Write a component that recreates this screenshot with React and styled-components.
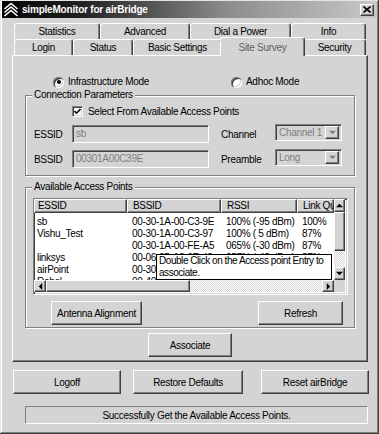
import React from 'react';
import styled, { createGlobalStyle, css } from 'styled-components';

const FACE = '#d4d4d4';

const GlobalStyle = createGlobalStyle`
  html, body { margin: 0; padding: 0; background: ${FACE}; }
  body {
    font-family: "Liberation Sans", Arial, sans-serif;
    font-size: 10px;
    letter-spacing: -0.3px;
    color: #000;
  }
  * { box-sizing: border-box; }
`;

const raised = css`
  border-top: 1px solid #fff;
  border-left: 1px solid #fff;
  border-right: 1px solid #404040;
  border-bottom: 1px solid #404040;
  box-shadow: inset -1px -1px #808080;
`;

const sunken = css`
  border-top: 1px solid #808080;
  border-left: 1px solid #808080;
  border-right: 1px solid #fff;
  border-bottom: 1px solid #fff;
  box-shadow: inset 1px 1px #404040, inset -1px -1px ${FACE};
`;

const Window = styled.div`
  width: 379px;
  height: 434px;
  background: ${FACE};
  padding: 1px 2px 2px;
  box-shadow: inset -1px -1px #404040, inset 1px 1px #e4e4e4, inset -2px -2px #808080, inset 2px 2px #fff;
  display: flex;
  flex-direction: column;
`;

const TitleBar = styled.div`
  height: 17px;
  display: flex;
  align-items: center;
  padding: 0 3px 0 1px;
  background: linear-gradient(90deg, #060606 0%, #1e1e1e 20%, #8c8c8c 60%, #c8c8c8 100%);
  color: #fff;
`;

const Title = styled.div`
  flex: 1;
  margin-left: 3px;
  font-weight: bold;
  font-size: 10px;
  letter-spacing: -0.2px;
`;

const CloseButton = styled.div`
  ${raised};
  width: 14px;
  height: 12px;
  background: ${FACE};
  display: flex;
  align-items: center;
  justify-content: center;
`;

const Body = styled.div`
  flex: 1;
  padding: 5px 0 0 10px;
  display: flex;
  flex-direction: column;
`;

const TabStrip = styled.div`
  display: flex;
  flex-direction: column;
`;

const TabRow = styled.div`
  display: flex;
  height: 16px;
  padding-left: 2px;
`;

const Tab = styled.div`
  width: ${p => p.$w}px;
  height: 16px;
  display: flex;
  align-items: center;
  justify-content: center;
  background: ${FACE};
  border-top: 1px solid #fff;
  border-left: 1px solid #fff;
  border-right: 1px solid #404040;
  box-shadow: inset -1px 0 #808080;
  border-radius: 3px 3px 0 0;
  white-space: nowrap;
  ${p => p.$active && css`
    width: ${p.$w + 4}px;
    height: 19px;
    margin: -2px -2px -1px;
    position: relative;
    z-index: 1;
    color: #606060;
  `}
`;

const Panel = styled.div`
  ${raised};
  width: 356px;
  height: 307px;
  padding: 20px 0 0 12px;
  display: flex;
  flex-direction: column;
  align-items: flex-start;
`;

const ModeRow = styled.div`
  display: flex;
  align-items: center;
  height: 12px;
  padding-left: 28px;
`;

const RadioOption = styled.label`
  display: flex;
  align-items: center;
  gap: 4px;
  width: ${p => (p.$w ? `${p.$w}px` : 'auto')};
  line-height: 12px;
`;

const RadioCircle = styled.span`
  width: 11px;
  height: 11px;
  border-radius: 50%;
  background: #fff;
  box-shadow: inset 1px 1px #808080, inset 2px 2px #404040, inset -1px -1px #fff, inset -2px -2px ${FACE};
  display: flex;
  align-items: center;
  justify-content: center;
`;

const RadioDot = styled.span`
  width: 4px;
  height: 4px;
  border-radius: 50%;
  background: #000;
`;

const GroupBox = styled.div`
  width: 330px;
  height: ${p => p.$h}px;
  margin-top: ${p => p.$mt}px;
  border: 1px solid #808080;
  box-shadow: 1px 1px 0 #fff, inset 1px 1px 0 #fff;
  display: flex;
  flex-direction: column;
  align-items: flex-start;
`;

const GroupLabel = styled.div`
  margin: -7px 0 0 6px;
  padding: 0 2px;
  background: ${FACE};
  line-height: 12px;
`;

const CheckRow = styled.label`
  display: flex;
  align-items: center;
  gap: 5px;
  height: 11px;
  margin: 5px 0 0 46px;
`;

const CheckBox = styled.span`
  ${sunken};
  width: 11px;
  height: 11px;
  background: #fff;
  display: flex;
  align-items: center;
  justify-content: center;
`;

const FieldGrid = styled.div`
  display: grid;
  grid-template-columns: 38px 137px 66px 67px;
  grid-template-rows: 18px 18px;
  row-gap: 7px;
  margin: 8px 0 0 8px;
`;

const FieldLabel = styled.div`
  display: flex;
  align-items: center;
  white-space: nowrap;
  padding-left: ${p => p.$indent || 0}px;
`;

const TextBox = styled.div`
  ${sunken};
  background: ${FACE};
  color: #808080;
  padding: 2px 3px;
  line-height: 12px;
`;

const Combo = styled.div`
  ${sunken};
  height: 17px;
  margin-top: -1px;
  background: ${FACE};
  color: #808080;
  display: flex;
  align-items: center;
  padding: 0 2px 0 3px;
  justify-content: space-between;
`;

const ComboButton = styled.span`
  ${raised};
  width: 14px;
  height: 13px;
  background: ${FACE};
  display: flex;
  align-items: center;
  justify-content: center;
`;

const ListView = styled.div`
  ${sunken};
  position: relative;
  width: 315px;
  height: 97px;
  margin: 5px 0 0 7px;
  background: #fff;
  display: grid;
  grid-template-columns: 300px 11px;
  grid-template-rows: 81px 12px;
`;

const ListBody = styled.div`
  overflow: hidden;
`;

const COLS = '93px 94px 76px 37px';

const HeaderRow = styled.div`
  display: grid;
  grid-template-columns: ${COLS};
  height: 14px;
`;

const HeadCell = styled.div`
  ${raised};
  background: ${FACE};
  line-height: 12px;
  padding-left: ${p => (p.$first ? 3 : 5)}px;
  white-space: nowrap;
  overflow: hidden;
`;

const Rows = styled.div`
  padding-top: 3px;
`;

const Row = styled.div`
  display: grid;
  grid-template-columns: ${COLS};
  height: 12px;
  line-height: 12px;
`;

const Cell = styled.div`
  padding-left: ${p => (p.$first ? 3 : 5)}px;
  white-space: nowrap;
  overflow: hidden;
`;

const checker = css`
  background-color: ${FACE};
  background-image: repeating-conic-gradient(#fff 0 25%, ${FACE} 0 50%);
  background-size: 2px 2px;
`;

const VScroll = styled.div`
  display: flex;
  flex-direction: column;
`;

const HScroll = styled.div`
  display: flex;
`;

const ScrollArrow = styled.div`
  ${raised};
  flex: none;
  width: ${p => (p.$h ? 12 : 11)}px;
  height: ${p => (p.$h ? 12 : 13)}px;
  background: ${FACE};
  display: flex;
  align-items: center;
  justify-content: center;
`;

const Thumb = styled.div`
  ${raised};
  flex: none;
  background: ${FACE};
  width: ${p => (p.$h ? `${p.$size}px` : '11px')};
  height: ${p => (p.$h ? '12px' : `${p.$size}px`)};
`;

const Track = styled.div`
  flex: 1;
  ${checker};
`;

const Corner = styled.div`
  background: ${FACE};
`;

const Tooltip = styled.div`
  position: absolute;
  left: 122px;
  top: 55px;
  width: 176px;
  height: 26px;
  border: 1px solid #000;
  background: #fdfdfd;
  padding: 0 2px;
  line-height: 12px;
  letter-spacing: -0.45px;
  white-space: nowrap;
  z-index: 2;
`;

const GroupButtons = styled.div`
  width: 100%;
  display: flex;
  justify-content: space-between;
  padding: 0 11px 0 25px;
  margin-top: 6px;
`;

const Button = styled.button`
  ${raised};
  width: ${p => p.$w}px;
  height: 24px;
  margin: ${p => p.$m || 0};
  padding: 0;
  background: ${FACE};
  font: inherit;
  letter-spacing: inherit;
  color: #000;
`;

const BottomBar = styled.div`
  display: flex;
  gap: 12px;
  margin: 8px 0 0 1px;
  & > :last-child { margin-left: 6px; }
`;

const StatusBar = styled.div`
  width: 343px;
  height: 18px;
  margin: 12px 0 0 13px;
  border-top: 1px solid #808080;
  border-left: 1px solid #808080;
  border-right: 1px solid #fff;
  border-bottom: 1px solid #fff;
  display: flex;
  align-items: center;
  justify-content: center;
`;

const Arrow = ({ dir, color = '#000' }) => {
  const pts = {
    up: '0,4 3.5,0.5 7,4',
    down: '0,0.5 3.5,4 7,0.5',
    left: '4,0 0.5,3.5 4,7',
    right: '0.5,0 4,3.5 0.5,7',
  }[dir];
  const vertical = dir === 'up' || dir === 'down';
  return (
    <svg width={vertical ? 7 : 5} height={vertical ? 5 : 7} viewBox={vertical ? '0 0 7 4.5' : '0 0 4.5 7'}>
      <polygon points={pts} fill={color} />
    </svg>
  );
};

const AppIcon = () => (
  <svg width="16" height="15" viewBox="0 0 16 15">
    <rect width="16" height="15" fill="#000" />
    <polyline points="1.5,7 8,1.5 14.5,7" fill="none" stroke="#fff" strokeWidth="1.6" />
    <polyline points="1.5,10.5 8,5 14.5,10.5" fill="none" stroke="#fff" strokeWidth="1.6" />
    <polyline points="1.5,14 8,8.5 14.5,14" fill="none" stroke="#fff" strokeWidth="1.6" />
  </svg>
);

const topTabs = [
  ['Statistics', 86],
  ['Advanced', 90],
  ['Dial a Power', 101],
  ['Info', 75],
];

const frontTabs = [
  ['Login', 59],
  ['Status', 60],
  ['Basic Settings', 89],
  ['Site Survey', 81, true],
  ['Security', 63],
];

const points = [
  ['sb', '00-30-1A-00-C3-9E', '100% (-95 dBm)', '100%'],
  ['Vishu_Test', '00-30-1A-00-C3-97', '100% ( 5 dBm)', '87%'],
  ['', '00-30-1A-00-FE-A5', '065% (-30 dBm)', '87%'],
  ['linksys', '00-06-25-A8-6E-42', '057% (-42 dBm)', '87%'],
  ['airPoint', '00-30-1A-00-F2-11', '045% (-55 dBm)', '67%'],
  ['Rebel', '00-40-96-A1-3B-0C', '030% (-70 dBm)', '47%'],
];

export default function App() {
  return (
    <>
      <GlobalStyle />
      <Window>
        <TitleBar>
          <AppIcon />
          <Title>simpleMonitor for airBridge</Title>
          <CloseButton>
            <svg width="8" height="7" viewBox="0 0 8 7">
              <path d="M0.5 0.5 L7.5 6.5 M7.5 0.5 L0.5 6.5" stroke="#000" strokeWidth="1.6" />
            </svg>
          </CloseButton>
        </TitleBar>
        <Body>
          <TabStrip>
            <TabRow>
              {topTabs.map(([label, w]) => (
                <Tab key={label} $w={w}>{label}</Tab>
              ))}
            </TabRow>
            <TabRow>
              {frontTabs.map(([label, w, active]) => (
                <Tab key={label} $w={w} $active={active}>{label}</Tab>
              ))}
            </TabRow>
          </TabStrip>
          <Panel>
            <ModeRow>
              <RadioOption $w={178}>
                <RadioCircle><RadioDot /></RadioCircle>
                Infrastructure Mode
              </RadioOption>
              <RadioOption>
                <RadioCircle />
                Adhoc Mode
              </RadioOption>
            </ModeRow>

            <GroupBox $h={81} $mt={7}>
              <GroupLabel>Connection Parameters</GroupLabel>
              <CheckRow>
                <CheckBox>
                  <svg width="7" height="7" viewBox="0 0 7 7">
                    <polyline points="0.5,3 2.5,5.2 6.5,1" fill="none" stroke="#000" strokeWidth="1.6" />
                  </svg>
                </CheckBox>
                Select From Available Access Points
              </CheckRow>
              <FieldGrid>
                <FieldLabel>ESSID</FieldLabel>
                <TextBox>sb</TextBox>
                <FieldLabel $indent={12}>Channel</FieldLabel>
                <Combo>
                  Channel 1
                  <ComboButton><Arrow dir="down" color="#808080" /></ComboButton>
                </Combo>
                <FieldLabel>BSSID</FieldLabel>
                <TextBox>00301A00C39E</TextBox>
                <FieldLabel $indent={12}>Preamble</FieldLabel>
                <Combo>
                  Long
                  <ComboButton><Arrow dir="down" color="#808080" /></ComboButton>
                </Combo>
              </FieldGrid>
            </GroupBox>

            <GroupBox $h={141} $mt={11}>
              <GroupLabel>Available Access Points</GroupLabel>
              <ListView>
                <ListBody>
                  <HeaderRow>
                    <HeadCell $first>ESSID</HeadCell>
                    <HeadCell>BSSID</HeadCell>
                    <HeadCell>RSSI</HeadCell>
                    <HeadCell>Link Quality</HeadCell>
                  </HeaderRow>
                  <Rows>
                    {points.map((p, i) => (
                      <Row key={i}>
                        <Cell $first>{p[0]}</Cell>
                        <Cell>{p[1]}</Cell>
                        <Cell>{p[2]}</Cell>
                        <Cell>{p[3]}</Cell>
                      </Row>
                    ))}
                  </Rows>
                </ListBody>
                <VScroll>
                  <ScrollArrow><Arrow dir="up" /></ScrollArrow>
                  <Thumb $size={39} />
                  <Track />
                  <ScrollArrow><Arrow dir="down" /></ScrollArrow>
                </VScroll>
                <HScroll>
                  <ScrollArrow $h><Arrow dir="left" /></ScrollArrow>
                  <Thumb $h $size={144} />
                  <Track />
                  <ScrollArrow $h><Arrow dir="right" /></ScrollArrow>
                </HScroll>
                <Corner />
                <Tooltip>
                  Double Click on the Access point Entry to
                  <br />
                  associate.
                </Tooltip>
              </ListView>
              <GroupButtons>
                <Button $w={91}>Antenna Alignment</Button>
                <Button $w={85}>Refresh</Button>
              </GroupButtons>
            </GroupBox>

            <Button $w={84} $m="5px 0 0 123px">Associate</Button>
          </Panel>

          <BottomBar>
            <Button $w={108}>Logoff</Button>
            <Button $w={110}>Restore Defaults</Button>
            <Button $w={108}>Reset airBridge</Button>
          </BottomBar>

          <StatusBar>Successfully Get the Available Access Points.</StatusBar>
        </Body>
      </Window>
    </>
  );
}
